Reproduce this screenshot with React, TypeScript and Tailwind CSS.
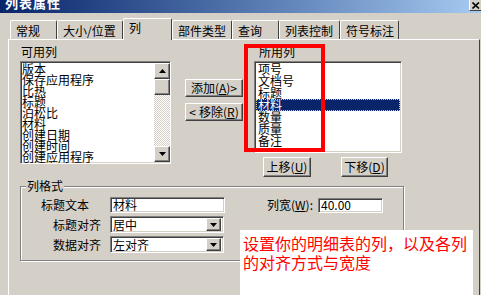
import React from 'react';

const raised =
  'border border-t-white border-l-white border-r-[#404040] border-b-[#404040] shadow-[inset_-1px_-1px_0_#808080] bg-[#d4d0c8]';
const sunken =
  'border border-t-[#808080] border-l-[#808080] border-r-white border-b-white shadow-[inset_1px_1px_0_#404040,inset_-1px_-1px_0_#d4d0c8] bg-white';

const Arrow: React.FC<{ down?: boolean }> = ({ down }) => (
  <svg width="7" height="4" viewBox="0 0 7 4">
    {down ? <polygon points="0,0 7,0 3.5,4" fill="#000" /> : <polygon points="0,4 7,4 3.5,0" fill="#000" />}
  </svg>
);

const Tab: React.FC<{ className: string; active?: boolean; children: React.ReactNode }> = ({ className, active, children }) => (
  <div
    className={
      active
        ? `relative z-10 -mb-px h-[22px] rounded-t-[2px] border-t border-l border-r border-t-white border-l-white border-r-[#404040] bg-[#d4d0c8] pl-[5px] pt-[3px] leading-[12px] ${className}`
        : `h-[19px] rounded-t-[2px] border-t border-l border-r border-t-white border-l-white border-r-[#404040] pl-[5px] pt-[4px] leading-[12px] ${className}`
    }
  >
    {children}
  </div>
);

const Select: React.FC<{ value: string }> = ({ value }) => (
  <div className={`flex h-[17px] w-[114px] items-center justify-between pl-[2px] pr-[2px] ${sunken}`}>
    <span className="leading-[12px]">{value}</span>
    <div className={`flex h-[13px] w-[15px] items-center justify-center ${raised}`}>
      <Arrow down />
    </div>
  </div>
);

const leftItems = ['版本', '保存应用程序', '比热', '标题', '泊松比', '材料', '创建日期', '创建时间', '创建应用程序', '创建者'];
const rightItems = ['项号', '文档号', '标题', '材料', '数量', '质量', '备注'];

export default function App() {
  return (
    <div className="relative h-[295px] w-[481px] overflow-hidden bg-[#d4d0c8] font-['Noto_Sans_CJK_SC','Noto_Sans',sans-serif] text-[12px] text-black">
      {/* title bar */}
      <div className="flex h-[13px] items-start justify-between overflow-hidden bg-linear-to-r from-[#0a246a] to-[#a6caf0]">
        <span className="-mt-[5px] pl-[5px] text-[13px] font-bold leading-[15px] tracking-[1px] text-white">列表属性</span>
        <div className="flex h-[11px] w-[12px] items-center justify-center border-b border-l border-b-[#404040] border-l-white bg-[#d4d0c8]">
          <svg width="8" height="7" viewBox="0 0 8 7">
            <path d="M0.5 0.5 L7 6.5 M7 0.5 L0.5 6.5" stroke="#000" strokeWidth="1.6" />
          </svg>
        </div>
      </div>

      {/* tabs */}
      <div className="flex h-[26px] items-end pl-[10px]">
        <Tab className="w-[47px]">常规</Tab>
        <Tab className="w-[66px]">大小/位置</Tab>
        <Tab className="w-[49px]" active>列</Tab>
        <Tab className="w-[60px]">部件类型</Tab>
        <Tab className="w-[47px]">查询</Tab>
        <Tab className="w-[61px]">列表控制</Tab>
        <Tab className="w-[59px]">符号标注</Tab>
      </div>

      {/* tab panel */}
      <div className="ml-[8px] h-[256px] w-[472px] border-t border-l border-r border-t-white border-l-white border-r-[#404040] pt-[6px]">
        <div className="flex items-start">
          {/* available columns */}
          <div className="ml-[11px] w-[151px]">
            <div className="h-[15px] pl-px leading-[12px]">可用列</div>
            <div className={`flex h-[103px] ${sunken}`}>
              <div className="flex-1 overflow-hidden pl-px pt-px">
                {leftItems.map((t) => (
                  <div key={t} className="h-[11px] whitespace-nowrap leading-[11px]">{t}</div>
                ))}
              </div>
              <div className="flex w-[16px] flex-col pt-px pb-px">
                <div className={`flex h-[16px] items-center justify-center ${raised}`}><Arrow /></div>
                <div className={`h-[16px] ${raised}`} />
                <div className="flex-1 bg-[repeating-conic-gradient(#d4d0c8_0%_25%,#ffffff_0%_50%)] bg-size-[2px_2px]" />
                <div className={`flex h-[16px] items-center justify-center ${raised}`}><Arrow down /></div>
              </div>
            </div>
          </div>

          {/* add / remove */}
          <div className="ml-[14px] mt-[33px] flex flex-col gap-[6px]">
            <div className={`flex h-[18px] w-[58px] items-center justify-center leading-[12px] ${raised}`}>
              添加(<u>A</u>)&gt;
            </div>
            <div className={`flex h-[18px] w-[58px] items-center justify-center gap-[3px] leading-[12px] ${raised}`}>
              <span>&lt;</span>
              <span>移除(<u>R</u>)</span>
            </div>
          </div>

          {/* used columns */}
          <div className="ml-[11px]">
            <div className="h-[15px] pl-[5px] leading-[12px]">所用列</div>
            <div className={`h-[92px] w-[148px] overflow-hidden pt-px pl-px pr-px ${sunken}`}>
              {rightItems.map((t) => (
                <div
                  key={t}
                  className={
                    t === '材料'
                      ? 'h-[12px] bg-[#0a246a] pl-[2px] leading-[12px] text-white outline-1 outline-dotted -outline-offset-1 outline-[#e8d070]'
                      : 'h-[12px] pl-[2px] leading-[12px]'
                  }
                >
                  {t}
                </div>
              ))}
            </div>
            <div className="mt-[4px] flex gap-[30px] pl-[9px]">
              <div className={`flex h-[20px] w-[48px] items-center justify-center leading-[12px] ${raised}`}>
                上移(<u>U</u>)
              </div>
              <div className={`flex h-[20px] w-[47px] items-center justify-center leading-[12px] ${raised}`}>
                下移(<u>D</u>)
              </div>
            </div>
          </div>
        </div>

        {/* column format group */}
        <div className="relative ml-[11px] mt-[9px] h-[75px] w-[384px] border border-[#808080] pt-[10px] shadow-[inset_1px_1px_0_#fff,1px_1px_0_#fff]">
          <span className="absolute -top-[7px] left-[5px] bg-[#d4d0c8] px-px leading-[12px]">列格式</span>
          <div className="flex items-start">
            <div className="flex flex-col gap-[3px]">
              <div className="flex h-[16px] items-center">
                <span className="w-[89px] pl-[20px] leading-[12px]">标题文本</span>
                <div className={`flex h-[16px] w-[115px] items-center pl-[2px] leading-[12px] ${sunken}`}>材料</div>
              </div>
              <div className="flex h-[17px] items-center">
                <span className="w-[89px] pl-[32px] leading-[12px]">标题对齐</span>
                <Select value="居中" />
              </div>
              <div className="flex h-[17px] items-center">
                <span className="w-[89px] pl-[32px] leading-[12px]">数据对齐</span>
                <Select value="左对齐" />
              </div>
            </div>
            <div className="ml-[42px] flex h-[16px] items-center">
              <span className="w-[51px] leading-[12px]">列宽(<u>W</u>):</span>
              <div className={`flex h-[15px] w-[65px] items-center pl-[2px] leading-[12px] ${sunken}`}>40.00</div>
            </div>
          </div>
        </div>
      </div>

      {/* annotations */}
      <div className="absolute left-[244px] top-[44px] h-[108px] w-[81px] border-[4px] border-[#ff0000]" />
      <div className="absolute left-[240px] top-[230px] h-[70px] w-[233px] bg-white pl-[3px] pt-[4px] text-[16px] leading-[19px] text-[#ff0000]">
        设置你的明细表的列，以及各列
        <br />
        的对齐方式与宽度
      </div>
    </div>
  );
}
